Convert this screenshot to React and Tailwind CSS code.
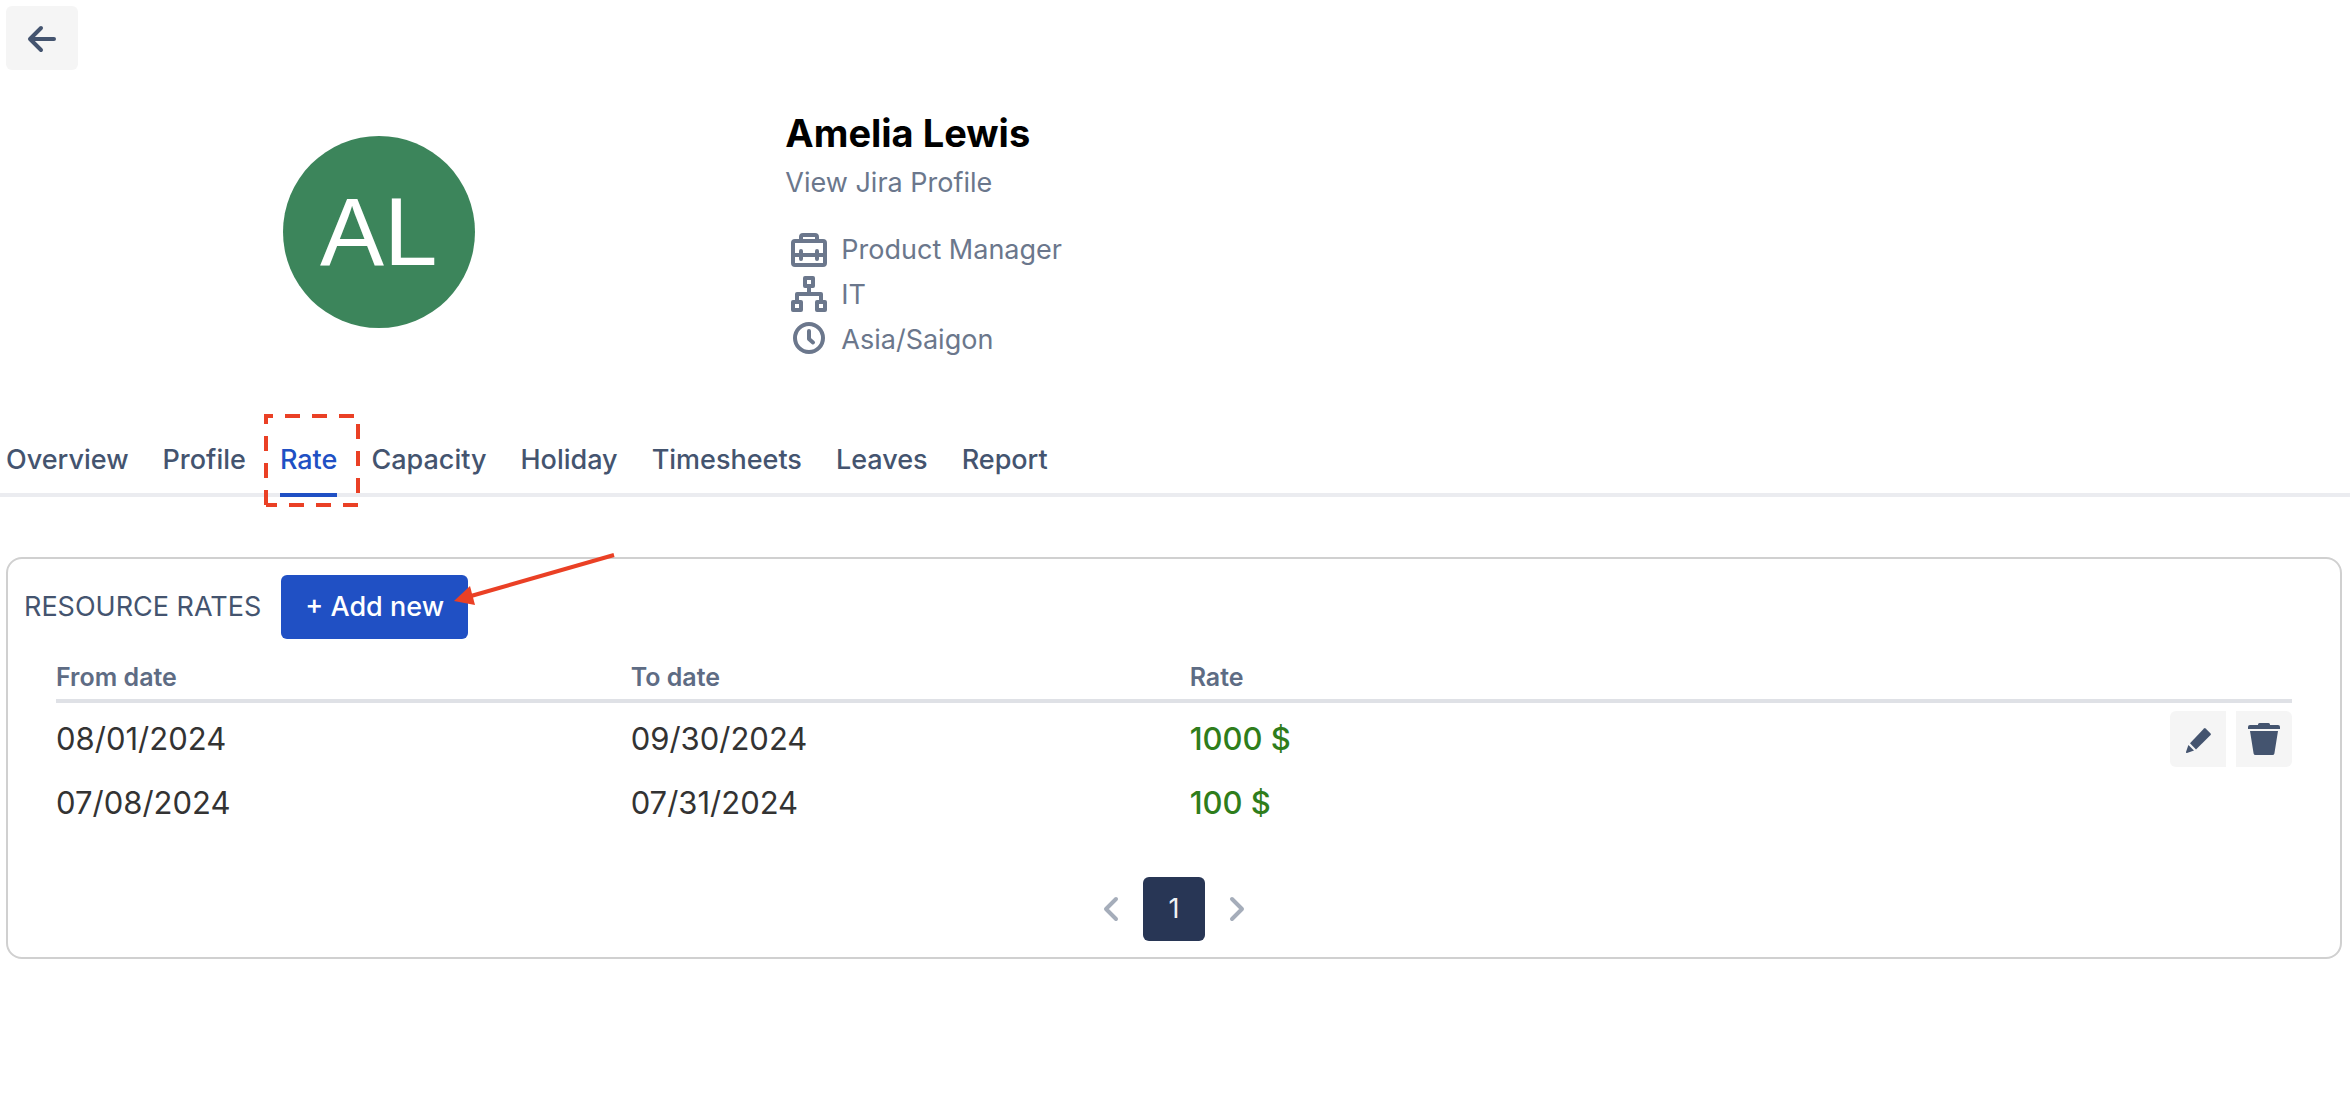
import React from 'react'

const TABS = ['Overview', 'Profile', 'Rate', 'Capacity', 'Holiday', 'Timesheets', 'Leaves', 'Report']

const RATES = [
  { from: '08/01/2024', to: '09/30/2024', rate: '1000 $', editable: true },
  { from: '07/08/2024', to: '07/31/2024', rate: '100 $', editable: false },
]

function IconBack() {
  return (
    <svg viewBox="0 0 24 24" className="w-12 h-12" fill="none" stroke="currentColor" strokeWidth="2" strokeLinecap="round" strokeLinejoin="round">
      <path d="M6.2 12.5H18M11.5 7L6 12.5L11.5 18" />
    </svg>
  )
}

function IconBriefcase() {
  return (
    <svg viewBox="0 0 48 48" className="w-12 h-12 -my-2" fill="none" stroke="currentColor" strokeWidth="4">
      <rect x="8" y="15" width="32" height="24" rx="2" />
      <path d="M16 15V11a2 2 0 0 1 2-2h12a2 2 0 0 1 2 2v4M8 29H40" />
      <path d="M16 25V33M32 25V33" strokeLinecap="round" />
    </svg>
  )
}

function IconDepartment() {
  return (
    <svg viewBox="0 0 48 48" className="w-12 h-12 -my-2" fill="none" stroke="currentColor" strokeWidth="4" strokeLinejoin="round">
      <rect x="20" y="7" width="8" height="8" />
      <rect x="8" y="31" width="8" height="8" />
      <rect x="32" y="31" width="8" height="8" />
      <path d="M24 16V23M12 31V23H36V31" />
    </svg>
  )
}

function IconClock() {
  return (
    <svg viewBox="0 0 48 48" className="w-12 h-12 -my-2" fill="none" stroke="currentColor" strokeWidth="4" strokeLinecap="round" strokeLinejoin="round">
      <circle cx="24" cy="22" r="14" />
      <path d="M24 15V23L28 26.5" />
    </svg>
  )
}

function IconPencil() {
  return (
    <svg viewBox="0 0 56 56" className="w-14 h-14" fill="currentColor">
      <path d="M34 17.4a1.2 1.2 0 0 1 1.6 0L40.6 22.4a1.2 1.2 0 0 1 0 1.6L26 38.4L20 32.2Z" />
      <path d="M18.4 34L24 39.6L17 41.9a.8.8 0 0 1-1-1Z" />
    </svg>
  )
}

function IconTrash() {
  return (
    <svg viewBox="0 0 56 56" className="w-14 h-14" fill="currentColor">
      <path d="M12 18V16a2 2 0 0 1 2-2h8v-.5A1.5 1.5 0 0 1 23.500 12h9A1.500 1.500 0 0 1 34 13.500V14h8a2 2 0 0 1 2 2v2Z" />
      <path d="M14 20H42L38.400 42.400a2 2 0 0 1-2 1.600H19.600a2 2 0 0 1-2-1.600Z" />
    </svg>
  )
}

function IconChevron({ d }) {
  return (
    <svg viewBox="0 0 24 24" className="w-12 h-12" fill="none" stroke="currentColor" strokeWidth="2" strokeLinecap="round" strokeLinejoin="round">
      <path d={d} />
    </svg>
  )
}

function InfoRow({ icon: Icon, children }) {
  return (
    <li className="flex items-center gap-2 h-[45px]">
      <Icon />
      <span>{children}</span>
    </li>
  )
}

function ProfileHeader() {
  return (
    <section className="grid grid-cols-3 pt-[39px]">
      <div className="flex justify-center pr-[26px] pt-[27px]">
        <div className="w-48 h-48 rounded-full bg-[#3c855b] text-white flex items-center justify-center font-['Liberation_Sans',sans-serif] text-8xl">
          AL
        </div>
      </div>
      <div className="pl-0.5 text-[#6b778c]">
        <h1 className="text-black text-[38px] leading-12 font-bold">Amelia Lewis</h1>
        <a href="#jira" className="block mt-1.5">View Jira Profile</a>
        <ul className="mt-6">
          <InfoRow icon={IconBriefcase}>Product Manager</InfoRow>
          <InfoRow icon={IconDepartment}>IT</InfoRow>
          <InfoRow icon={IconClock}>Asia/Saigon</InfoRow>
        </ul>
      </div>
    </section>
  )
}

function Tab({ label, active }) {
  return (
    <button
      role="tab"
      aria-selected={active}
      className={`relative shrink-0 -mb-1 pb-[13px] border-b-4 font-medium ${active ? 'text-[#2050c4] border-[#2050c4]' : 'text-[#44546f] border-transparent'}`}
    >
      {label}
      {active && (
        <svg width="96" height="93" className="absolute -left-4 -bottom-3.5 pointer-events-none" fill="none" stroke="#ea4025" strokeWidth="4" strokeDasharray="15 12">
          <path d="M2 91V2H94V91H2" />
        </svg>
      )}
    </button>
  )
}

function RatesTable() {
  return (
    <table className="w-full table-fixed text-left text-[31px] leading-10 text-[#333333]">
      <colgroup>
        <col className="w-[25.7%]" />
        <col className="w-1/4" />
        <col className="w-1/4" />
        <col />
      </colgroup>
      <thead>
        <tr className="border-b-4 border-[#dfe1e6] text-[25px] leading-8 text-[#5e6c84]">
          <th className="pt-[22px] pb-1.5 font-semibold">From date</th>
          <th className="pt-[22px] pb-1.5 font-semibold">To date</th>
          <th className="pt-[22px] pb-1.5 font-semibold">Rate</th>
          <th aria-label="Actions"></th>
        </tr>
      </thead>
      <tbody>
        {RATES.map((r) => (
          <tr key={r.from}>
            <td className="py-2">{r.from}</td>
            <td className="py-2">{r.to}</td>
            <td className="py-2 font-medium text-[#2f7d1b]">{r.rate}</td>
            <td className="py-2">
              {r.editable && (
                <div className="flex justify-end gap-2.5 text-[#44546f]">
                  <button aria-label="Edit" className="bg-[#f5f5f5] rounded-l-md"><IconPencil /></button>
                  <button aria-label="Delete" className="bg-[#f5f5f5] rounded-r-md"><IconTrash /></button>
                </div>
              )}
            </td>
          </tr>
        ))}
      </tbody>
    </table>
  )
}

export default function App() {
  return (
    <main className="bg-white font-['Inter',sans-serif] text-[27px] leading-10">
      <div className="pt-1.5 px-1.5">
        <button aria-label="Back" className="w-[72px] h-16 flex items-center justify-center rounded-md bg-[#f5f5f5] text-[#44546f]">
          <IconBack />
        </button>
      </div>

      <ProfileHeader />

      <nav role="tablist" className="mt-[78px] pl-1.5 flex gap-[34px] border-b-4 border-[#ebecf0]">
        {TABS.map((t) => <Tab key={t} label={t} active={t === 'Rate'} />)}
      </nav>

      <section className="mt-[60px] ml-1.5 mr-2 border-2 border-[#d0d0d0] rounded-2xl px-4 py-4">
        <div className="flex items-center gap-5 text-[#44546f]">
          <h2>RESOURCE RATES</h2>
          <button className="relative h-16 px-6 rounded-md bg-[#2050c4] text-white font-medium">
            + Add new
            {/* callout arrow pointing at the button */}
            <svg width="162" height="56" className="absolute -right-[147px] -top-6 pointer-events-none">
              <path d="M161 4L18 45" stroke="#ea4025" strokeWidth="4" />
              <path d="M1 50L17 35L22 54Z" fill="#ea4025" />
            </svg>
          </button>
        </div>

        <div className="px-8">
          <RatesTable />
        </div>

        <div className="mt-[46px] flex items-center justify-center gap-2 text-[#a5adba]">
          <button aria-label="Previous page"><IconChevron d="M14.500 7L9.500 12L14.500 17" /></button>
          <button aria-current="page" className="w-[62px] h-16 rounded-md bg-[#283655] text-[#f0f2f5]">1</button>
          <button aria-label="Next page"><IconChevron d="M9.500 7L14.500 12L9.500 17" /></button>
        </div>
      </section>
    </main>
  )
}
